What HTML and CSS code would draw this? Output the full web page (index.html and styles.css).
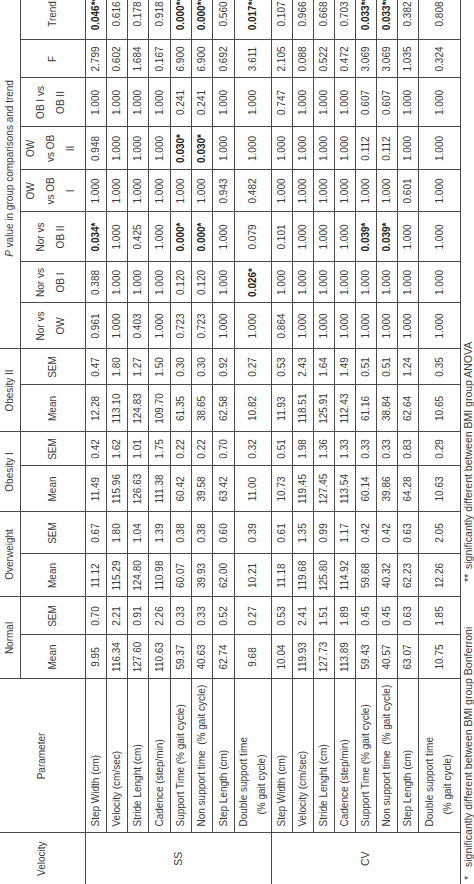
FILE: index.html
```html
<!DOCTYPE html>
<html lang="en">
<head>
<meta charset="utf-8">
<title>Gait parameters by BMI group</title>
<link rel="stylesheet" href="styles.css">
</head>
<body>
<div class="sheet">
  <table class="gait">
    <colgroup>
      <col class="w51"><col class="w154">
      <col class="w44"><col class="w38">
      <col class="w43"><col class="w42">
      <col class="w46"><col class="w34">
      <col class="w47"><col class="w36">
      <col class="w46"><col class="w41"><col class="w50"><col class="w42"><col class="w43"><col class="w49"><col class="w38"><col class="w52">
    </colgroup>
    <thead>
      <tr class="h1">
        <th rowspan="2" class="first">Velocity</th>
        <th rowspan="2">Parameter</th>
        <th colspan="2">Normal</th>
        <th colspan="2">Overweight</th>
        <th colspan="2">Obesity I</th>
        <th colspan="2">Obesity II</th>
        <th colspan="8"><i>P</i> value in group comparisons and trend</th>
      </tr>
      <tr class="h2">
        <th>Mean</th><th>SEM</th>
        <th>Mean</th><th>SEM</th>
        <th>Mean</th><th>SEM</th>
        <th>Mean</th><th>SEM</th>
        <th class="ml">Nor vs<br>OW</th>
        <th class="ml">Nor vs<br>OB I</th>
        <th class="ml">Nor vs<br>OB II</th>
        <th class="ml">OW<br>vs OB<br>I</th>
        <th class="ml">OW<br>vs OB<br>II</th>
        <th class="ml">OB I vs<br>OB II</th>
        <th>F</th>
        <th>Trend</th>
      </tr>
    </thead>
    <tbody>
      <tr class="r21">
        <td rowspan="8" class="first lab">SS</td>
        <td class="p">Step Width (cm)</td>
        <td>9.95</td><td>0.70</td><td>11.12</td><td>0.67</td><td>11.49</td><td>0.42</td><td>12.28</td><td>0.47</td>
        <td>0.961</td><td>0.388</td><td class="sig">0.034*</td><td>1.000</td><td>0.948</td><td>1.000</td><td>2.799</td><td class="sig">0.046**</td>
      </tr>
      <tr class="r21">
        <td class="p">Velocity (cm/sec)</td>
        <td>116.34</td><td>2.21</td><td>115.29</td><td>1.80</td><td>115.96</td><td>1.62</td><td>113.10</td><td>1.80</td>
        <td>1.000</td><td>1.000</td><td>1.000</td><td>1.000</td><td>1.000</td><td>1.000</td><td>0.602</td><td>0.616</td>
      </tr>
      <tr class="r21">
        <td class="p">Stride Lenght (cm)</td>
        <td>127.60</td><td>0.91</td><td>124.80</td><td>1.04</td><td>126.63</td><td>1.01</td><td>124.83</td><td>1.27</td>
        <td>0.403</td><td>1.000</td><td>0.425</td><td>1.000</td><td>1.000</td><td>1.000</td><td>1.684</td><td>0.178</td>
      </tr>
      <tr class="r22">
        <td class="p">Cadence (step/min)</td>
        <td>110.63</td><td>2.26</td><td>110.98</td><td>1.39</td><td>111.38</td><td>1.75</td><td>109.70</td><td>1.50</td>
        <td>1.000</td><td>1.000</td><td>1.000</td><td>1.000</td><td>1.000</td><td>1.000</td><td>0.167</td><td>0.918</td>
      </tr>
      <tr class="r21">
        <td class="p">Support Time (% gait cycle)</td>
        <td>59.37</td><td>0.33</td><td>60.07</td><td>0.38</td><td>60.42</td><td>0.22</td><td>61.35</td><td>0.30</td>
        <td>0.723</td><td>0.120</td><td class="sig">0.000*</td><td>1.000</td><td class="sig">0.030*</td><td>0.241</td><td>6.900</td><td class="sig">0.000**</td>
      </tr>
      <tr class="r21">
        <td class="p">Non support time&nbsp; (% gait cycle)</td>
        <td>40.63</td><td>0.33</td><td>39.93</td><td>0.38</td><td>39.58</td><td>0.22</td><td>38.65</td><td>0.30</td>
        <td>0.723</td><td>0.120</td><td class="sig">0.000*</td><td>1.000</td><td class="sig">0.030*</td><td>0.241</td><td>6.900</td><td class="sig">0.000**</td>
      </tr>
      <tr class="r22">
        <td class="p">Step Length (cm)</td>
        <td>62.74</td><td>0.52</td><td>62.00</td><td>0.60</td><td>63.42</td><td>0.70</td><td>62.58</td><td>0.92</td>
        <td>1.000</td><td>1.000</td><td>1.000</td><td>0.943</td><td>1.000</td><td>1.000</td><td>0.692</td><td>0.560</td>
      </tr>
      <tr class="r35">
        <td class="p two">Double support time<br><span class="ind">(% gait cycle)</span></td>
        <td>9.68</td><td>0.27</td><td>10.21</td><td>0.39</td><td>11.00</td><td>0.32</td><td>10.82</td><td>0.27</td>
        <td>1.000</td><td class="sig">0.026*</td><td>0.079</td><td>0.482</td><td>1.000</td><td>1.000</td><td>3.611</td><td class="sig">0.017**</td>
      </tr>

      <tr class="r21">
        <td rowspan="8" class="first lab">CV</td>
        <td class="p">Step Width (cm)</td>
        <td>10.04</td><td>0.53</td><td>11.18</td><td>0.61</td><td>10.73</td><td>0.51</td><td>11.93</td><td>0.53</td>
        <td>0.864</td><td>1.000</td><td>0.101</td><td>1.000</td><td>1.000</td><td>0.747</td><td>2.105</td><td>0.107</td>
      </tr>
      <tr class="r21">
        <td class="p">Velocity (cm/sec)</td>
        <td>119.93</td><td>2.41</td><td>119.68</td><td>1.35</td><td>119.45</td><td>1.98</td><td>118.51</td><td>2.43</td>
        <td>1.000</td><td>1.000</td><td>1.000</td><td>1.000</td><td>1.000</td><td>1.000</td><td>0.088</td><td>0.966</td>
      </tr>
      <tr class="r21">
        <td class="p">Stride Lenght (cm)</td>
        <td>127.73</td><td>1.51</td><td>125.80</td><td>0.99</td><td>127.45</td><td>1.36</td><td>125.91</td><td>1.64</td>
        <td>1.000</td><td>1.000</td><td>1.000</td><td>1.000</td><td>1.000</td><td>1.000</td><td>0.522</td><td>0.668</td>
      </tr>
      <tr class="r21">
        <td class="p">Cadence (step/min)</td>
        <td>113.89</td><td>1.89</td><td>114.92</td><td>1.17</td><td>113.54</td><td>1.33</td><td>112.43</td><td>1.49</td>
        <td>1.000</td><td>1.000</td><td>1.000</td><td>1.000</td><td>1.000</td><td>1.000</td><td>0.472</td><td>0.703</td>
      </tr>
      <tr class="r21">
        <td class="p">Support Time (% gait cycle)</td>
        <td>59.43</td><td>0.45</td><td>59.68</td><td>0.42</td><td>60.14</td><td>0.33</td><td>61.16</td><td>0.51</td>
        <td>1.000</td><td>1.000</td><td class="sig">0.039*</td><td>1.000</td><td>0.112</td><td>0.607</td><td>3.069</td><td class="sig">0.033**</td>
      </tr>
      <tr class="r21">
        <td class="p">Non support time&nbsp; (% gait cycle)</td>
        <td>40.57</td><td>0.45</td><td>40.32</td><td>0.42</td><td>39.86</td><td>0.33</td><td>38.84</td><td>0.51</td>
        <td>1.000</td><td>1.000</td><td class="sig">0.039*</td><td>1.000</td><td>0.112</td><td>0.607</td><td>3.069</td><td class="sig">0.033**</td>
      </tr>
      <tr class="r21">
        <td class="p">Step Length (cm)</td>
        <td>63.07</td><td>0.63</td><td>62.23</td><td>0.63</td><td>64.28</td><td>0.83</td><td>62.64</td><td>1.24</td>
        <td>1.000</td><td>1.000</td><td>1.000</td><td>0.601</td><td>1.000</td><td>1.000</td><td>1.035</td><td>0.382</td>
      </tr>
      <tr class="r42">
        <td class="p two">Double support time<br><span class="ind">(% gait cycle)</span></td>
        <td>10.75</td><td>1.85</td><td>12.26</td><td>2.05</td><td>10.63</td><td>0.29</td><td>10.65</td><td>0.35</td>
        <td>1.000</td><td>1.000</td><td>1.000</td><td>1.000</td><td>1.000</td><td>1.000</td><td>0.324</td><td>0.808</td>
      </tr>
    </tbody>
  </table>
  <div class="notes">
    <p class="note n1"><span class="mark">*</span>significantly different between BMI group Bonferroni</p>
    <p class="note n2"><span class="mark">**</span>significantly different between BMI group ANOVA</p>
  </div>
</div>
</body>
</html>
```
FILE: styles.css
```css
html, body {
  margin: 0;
  padding: 0;
  background: #ffffff;
  overflow: hidden;
}
body {
  width: 474px;
  height: 884px;
}
.sheet {
  width: 896px;
  height: 474px;
  transform-origin: 0 0;
  transform: translate(0, 884px) rotate(-90deg);
  font-family: "Liberation Sans", Arial, sans-serif;
  color: #3a3a3a;
}
.gait {
  border-collapse: collapse;
  table-layout: fixed;
  width: 896px;
}
.w51 { width: 51px; }
.w154 { width: 154px; }
.w44 { width: 44px; }
.w38 { width: 38px; }
.w43 { width: 43px; }
.w42 { width: 42px; }
.w46 { width: 46px; }
.w34 { width: 34px; }
.w47 { width: 47px; }
.w36 { width: 36px; }
.w41 { width: 41px; }
.w50 { width: 50px; }
.w49 { width: 49px; }
.w52 { width: 52px; }

.gait th,
.gait td {
  border: 1px solid #4a4a4a;
  padding: 0;
  text-align: center;
  vertical-align: middle;
  white-space: nowrap;
  overflow: hidden;
}
.gait th {
  font-weight: normal;
  font-size: 10px;
  line-height: 12px;
}
.gait td {
  font-size: 10px;
  line-height: 11px;
}
.gait thead .h1 th {
  border-top: none;
}
.gait .first {
  border-left: none;
}
.h1 { height: 20px; }
.h2 { height: 62px; }
.gait .h2 .ml {
  line-height: 20px;
  padding-bottom: 4px;
}
.r21 { height: 21px; }
.r22 { height: 22px; }
.r35 { height: 35px; }
.r42 { height: 42px; }

.gait td.lab {
  font-size: 10.5px;
}
.gait td.p {
  text-align: left;
  padding-left: 6px;
  font-size: 10px;
}
.gait td.two {
  line-height: 18px;
}
.ind {
  padding-left: 12px;
}
.gait td.sig {
  font-weight: bold;
  color: #222222;
}

.notes {
  display: flex;
  padding-top: 1px;
  font-size: 10.5px;
  line-height: 12px;
}
.note {
  margin: 0;
  white-space: nowrap;
}
.n1 {
  width: 298px;
  padding-left: 4px;
}
.mark {
  display: inline-block;
  width: 13px;
}
```
